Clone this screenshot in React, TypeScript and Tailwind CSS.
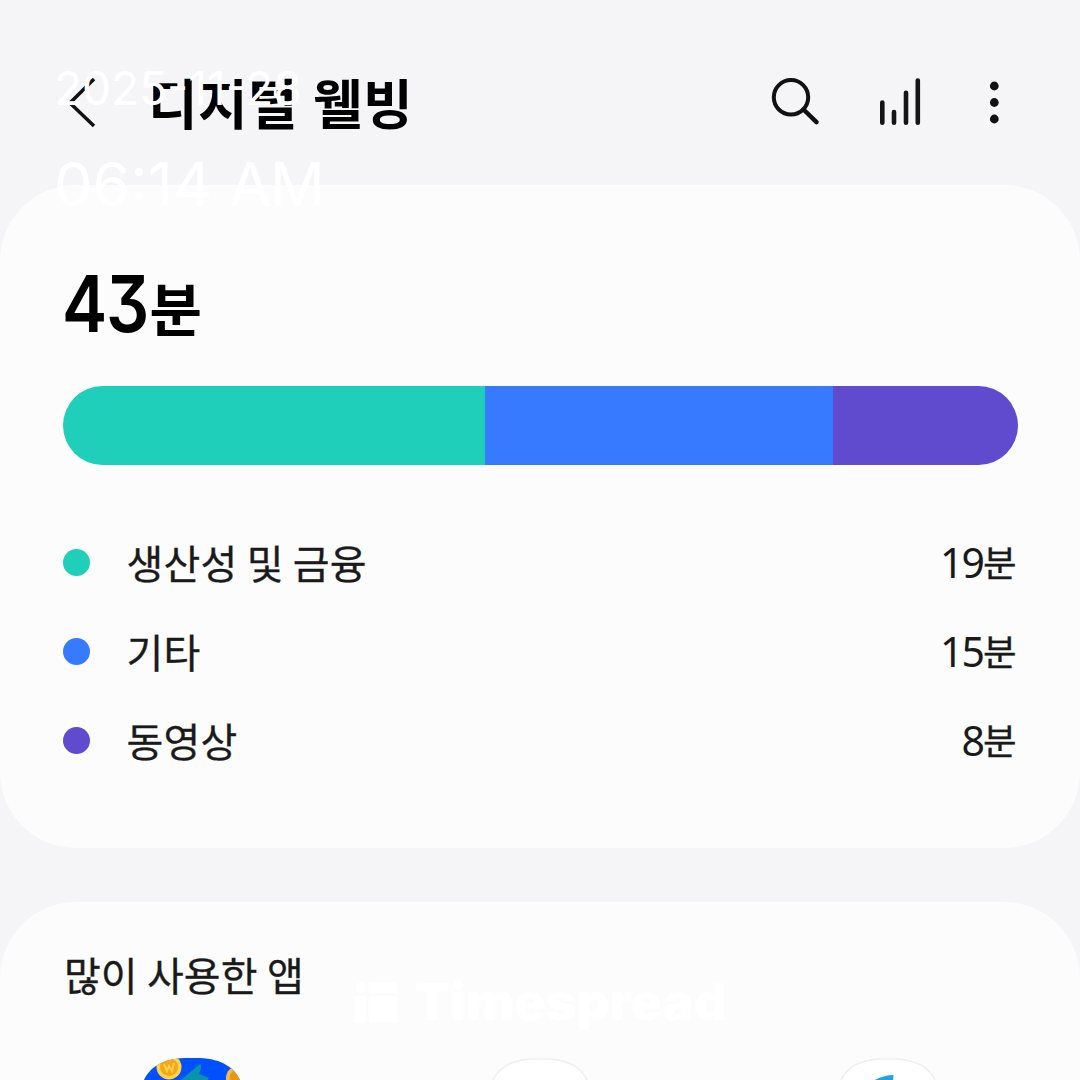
import React from "react";

const segments = [
  { label: "생산성 및 금융", value: "19", color: "bg-[#1fcfb9]", width: "w-[422px]" },
  { label: "기타", value: "15", color: "bg-[#387aff]", width: "w-[348px]" },
  { label: "동영상", value: "8", color: "bg-[#604ace]", width: "w-[185px]" },
];

function Header() {
  return (
    <header className="flex h-[185px] items-start pl-[66px] pr-[70px] pt-[77px]">
      <svg className="mt-px h-[50px] w-[30px]" viewBox="0 0 30 50" fill="none" stroke="#111" strokeWidth="3.5">
        <path d="M28 1 L4 25 L28 48" />
      </svg>
      <h1 className="ml-[52px] mt-[-5px] h-[60px] whitespace-nowrap text-[54px] font-bold leading-[60px] tracking-[0.2px] text-black [word-spacing:3px]">
        디지털 웰빙
      </h1>
      <div className="ml-auto flex">
        <svg className="h-[50px] w-[50px]" viewBox="0 0 50 50" fill="none" stroke="#111" strokeLinecap="round">
          <circle cx="21" cy="20.3" r="17.2" strokeWidth="4" />
          <path d="M33.5 32.5 L46.5 45.2" strokeWidth="4.5" />
        </svg>
        <svg className="ml-[58px] h-[50px] w-[44px]" viewBox="0 0 44 50" stroke="#151515" strokeWidth="4.6" strokeLinecap="round">
          <path d="M4.3 25.5V45.8M16 35V45.8M28 15.8V45.8M39.8 3.5V45.8" />
        </svg>
        <svg className="ml-[60px] h-[50px] w-[28px]" viewBox="0 0 28 50" fill="#111">
          <circle cx="12.3" cy="9" r="4.4" />
          <circle cx="12.3" cy="25.5" r="4.4" />
          <circle cx="12.3" cy="42" r="4.4" />
        </svg>
      </div>
    </header>
  );
}

function UsageCard() {
  return (
    <section className="h-[663px] rounded-[76px] bg-[#fcfcfc] pl-[62.5px] pr-[62.5px] pt-[79px]">
      <div className="flex h-[80px] items-baseline leading-[80px] text-black">
        <span className="ml-[-1px] inline-block w-[88px] origin-left scale-x-[0.87] font-['Inter',sans-serif] text-[78px] font-semibold tracking-[-1.5px] [font-feature-settings:'cv09']">
          43
        </span>
        <span className="relative -top-[1px] text-[57px] font-bold leading-[56px]">분</span>
      </div>
      <div className="mt-[42px] flex h-[79px] overflow-hidden rounded-full">
        {segments.map((s) => (
          <div key={s.label} className={`${s.width} ${s.color}`} />
        ))}
      </div>
      <ul className="mt-[52px]">
        {segments.map((s) => (
          <li key={s.label} className="flex h-[89px] items-center text-[#1a1a1a] [-webkit-text-stroke:0.3px_#1a1a1a]">
            <span className={`mt-px size-[27px] rounded-full ${s.color}`} />
            <span className="ml-[37px] text-[40px] leading-[60px] tracking-[0.2px]">{s.label}</span>
            <span className="ml-auto mr-px mt-[2px] flex items-baseline leading-[60px]">
              <span className="font-['Noto_Sans',sans-serif] text-[41px] tracking-[-2px] [-webkit-text-stroke:0px]">{s.value}</span>
              <span className="relative -top-[1px] text-[36.5px]">분</span>
            </span>
          </li>
        ))}
      </ul>
    </section>
  );
}

function AppsCard() {
  return (
    <section className="mt-[54px] h-[178px] overflow-hidden rounded-t-[76px] bg-[#fcfcfc] pt-[42px]">
      <h2 className="ml-[64px] h-[60px] text-[40px] leading-[60px] text-[#1a1a1a] [-webkit-text-stroke:0.3px_#1a1a1a] [word-spacing:0.5px]">
        많이 사용한 앱
      </h2>
      <div className="mt-[54px] flex gap-[248px] pl-[142px]">
        <svg className="h-[100px] w-[100px]" viewBox="0 0 100 100">
          <defs>
            <clipPath id="tile">
              <path d="M50 0C78 -1 92 9 98 22S87 100 50 100 -4 35 2 22 22 -1 50 0Z" />
            </clipPath>
          </defs>
          <g clipPath="url(#tile)">
            <rect width="100" height="100" fill="#0050ff" />
            <path d="M39 22 L58 6 Q61 7 57 16 L67 20 L52 40 L36 40Z" fill="#0894ac" />
            <circle cx="27" cy="9" r="12.5" fill="#ffd447" />
            <circle cx="27" cy="9" r="9" fill="#f7a519" />
            <path d="M22 6L25 13L27 8L30 13L32 5" fill="none" stroke="#ffd447" strokeWidth="2" />
            <circle cx="96" cy="20" r="12" fill="#eeb94e" />
            <circle cx="96" cy="20" r="8.5" fill="#e59a17" />
          </g>
        </svg>
        <svg className="h-[100px] w-[100px]" viewBox="0 0 100 100">
          <path d="M50 1C78 0 91 9 97 22S87 100 50 100 -3 35 3 22 22 0 50 1Z" fill="#fff" stroke="#efefef" strokeWidth="1.5" />
        </svg>
        <svg className="h-[100px] w-[100px]" viewBox="0 0 100 100">
          <path d="M50 1C78 0 91 9 97 22S87 100 50 100 -3 35 3 22 22 0 50 1Z" fill="#fff" stroke="#efefef" strokeWidth="1.5" />
          <path d="M35 23C42 19 49 17 55.5 17L54 40H35Z" fill="#22a0e8" />
        </svg>
      </div>
    </section>
  );
}

function Stamp() {
  return (
    <div className="pointer-events-none absolute left-[54px] top-[60px] whitespace-nowrap font-['Inter',sans-serif] text-white">
      <div className="h-[56px] text-[46px] leading-[56px]">2025-11-28</div>
      <div className="mt-[32px] h-[72px] text-[61px] leading-[72px]">
        06:14 <span className="tracking-[-1.5px]">AM</span>
      </div>
    </div>
  );
}

function Watermark() {
  return (
    <div className="pointer-events-none absolute left-[355px] top-[972px] flex items-center text-white">
      <svg className="h-[41px] w-[42px]" viewBox="0 0 42 41" fill="currentColor">
        <circle cx="6" cy="5.5" r="5.5" />
        <rect x="14" width="28" height="11" />
        <rect y="14" width="11" height="27" />
        <rect x="14" y="14" width="28" height="27" />
      </svg>
      <span className="ml-[18px] font-['Inter',sans-serif] text-[51px] font-black leading-[60px] tracking-[0.5px]">Timespread</span>
    </div>
  );
}

export default function App() {
  return (
    <main className="relative h-[1080px] w-[1080px] overflow-hidden bg-[#f5f5f8] font-['Noto_Sans_CJK_KR',sans-serif]">
      <Header />
      <UsageCard />
      <AppsCard />
      <Stamp />
      <Watermark />
    </main>
  );
}
